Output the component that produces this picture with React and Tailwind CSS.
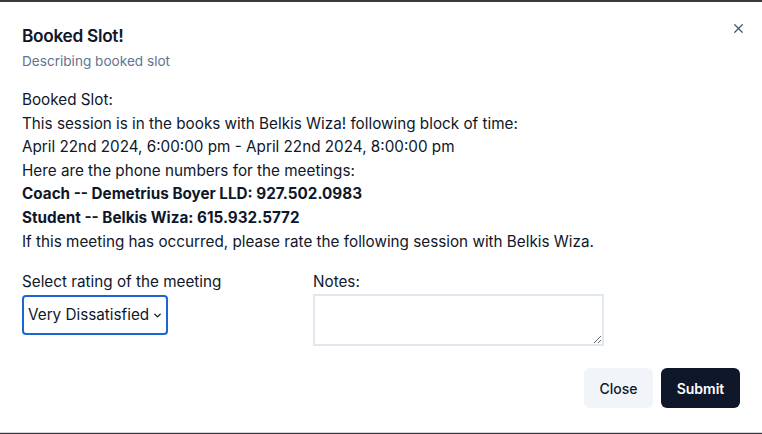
import { X, ChevronDown } from 'lucide-react';

export default function App() {
  return (
    <div className="h-[434px] w-[762px] overflow-hidden bg-[#3a3a3a] pt-[2px] font-['Inter',sans-serif] text-[#0f172a]">
      <div className="relative h-[431px] border-b border-gray-300 bg-white px-[22px] pt-[20px]">
        {/* Close icon */}
        <button className="absolute right-[16px] top-[19px] text-slate-600">
          <X size={15} strokeWidth={2} />
        </button>

        {/* Header */}
        <h2 className="text-[17.25px] font-semibold leading-7 tracking-[-0.3px]">Booked Slot!</h2>
        <p className="mt-[1px] text-[13.6px] leading-5 text-slate-500">Describing booked slot</p>

        {/* Body */}
        <div className="mt-[17px] text-[15.25px] leading-[23.6px]">
          <div>Booked Slot:</div>
          <div>This session is in the books with Belkis Wiza! following block of time:</div>
          <div>April 22nd 2024, 6:00:00 pm - April 22nd 2024, 8:00:00 pm</div>
          <div>Here are the phone numbers for the meetings:</div>
          <div className="font-bold">Coach -- Demetrius Boyer LLD: 927.502.0983</div>
          <div className="font-bold">Student -- Belkis Wiza: 615.932.5772</div>
          <div>If this meeting has occurred, please rate the following session with Belkis Wiza.</div>
        </div>

        {/* Form */}
        <div className="mt-[17px] flex gap-[32px] text-[15.25px]">
          <div className="flex w-[259px] flex-col">
            <label className="mb-[1px] leading-6">Select rating of the meeting</label>
            <div className="relative w-[146px]">
              <select className="h-[40px] w-[146px] appearance-none rounded-[4px] border-2 border-[#1a66d2] pl-[4px] pr-[16px] text-[15.25px] outline-none">
                <option>Very Dissatisfied</option>
                <option>Dissatisfied</option>
                <option>Neutral</option>
                <option>Satisfied</option>
                <option>Very Satisfied</option>
              </select>
              <ChevronDown size={11} strokeWidth={3} className="pointer-events-none absolute right-[5px] top-[15px]" />
            </div>
          </div>
          <div className="flex flex-col">
            <label className="leading-6">Notes:</label>
            <textarea className="h-[52px] w-[291px] border-2 border-[#e2e8f0] outline-none" />
          </div>
        </div>

        {/* Footer */}
        <div className="mt-[22px] flex justify-end gap-2 text-[14px]">
          <button className="h-[40px] w-[69px] rounded-md bg-[#f1f5f9] font-medium text-[#0f172a]">Close</button>
          <button className="h-[40px] w-[79px] rounded-md bg-[#0f172a] font-semibold text-white">Submit</button>
        </div>
      </div>
    </div>
  );
}
